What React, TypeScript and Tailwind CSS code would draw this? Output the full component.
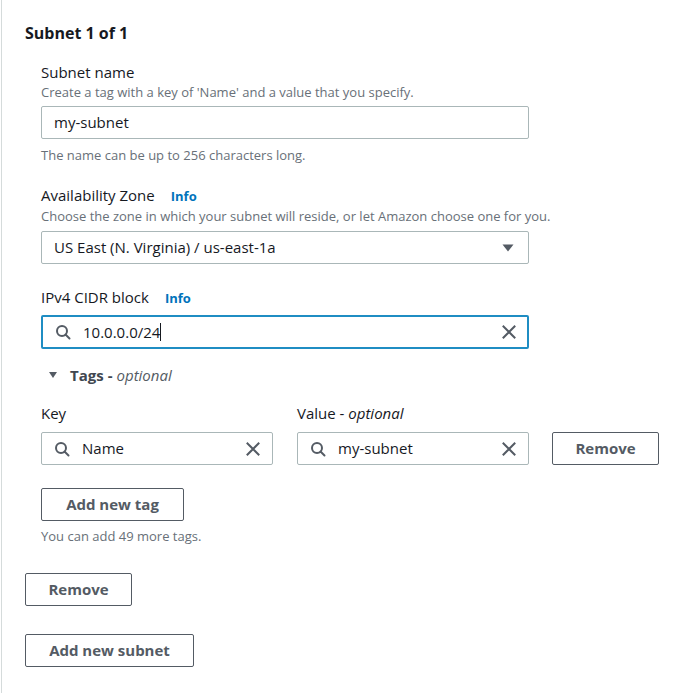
import React from "react";

const font = { fontFamily: '"Open Sans", "Noto Sans", Arial, sans-serif' };

function SearchIcon() {
  return (
    <svg width="16" height="16" viewBox="0 0 16 16" fill="none" stroke="#545b64" strokeWidth="2" strokeLinecap="round">
      <circle cx="7" cy="7" r="5" />
      <path d="M10.5 10.5 L14.5 14.5" />
    </svg>
  );
}

function XIcon() {
  return (
    <svg width="16" height="16" viewBox="0 0 16 16" fill="none" stroke="#545b64" strokeWidth="2" strokeLinecap="square">
      <path d="M2.5 2.5 L13.5 13.5 M13.5 2.5 L2.5 13.5" />
    </svg>
  );
}

function Btn({ children, w }: { children: React.ReactNode; w: string }) {
  return (
    <div
      className={`${w} h-[33px] flex items-center justify-center border border-[#545b64] rounded-[2px] text-[15px] font-bold text-[#545b64]`}
    >
      {children}
    </div>
  );
}

export default function App() {
  return (
    <div className="w-[687px] h-[693px] bg-white overflow-hidden text-[#16191f]" style={font}>
      <div className="ml-[1px] h-full border-l border-[#d5dbdb] pl-[23px] pt-[23px] flex flex-col">
        <div className="text-[16px] leading-[20px] font-bold">Subnet 1 of 1</div>

        <div className="pl-[16px] flex flex-col">
          <div className="mt-[18px] text-[15px] leading-[22px]">Subnet name</div>
          <div className="mt-[1px] text-[13px] leading-[16px] text-[#687078]">
            Create a tag with a key of 'Name' and a value that you specify.
          </div>
          <div className="mt-[6px] w-[488px] h-[33px] border border-[#aab7b8] rounded-[2px] flex items-center pl-[12px] text-[15px]">
            my-subnet
          </div>
          <div className="mt-[8px] text-[13px] leading-[16px] text-[#687078]">
            The name can be up to 256 characters long.
          </div>

          <div className="mt-[21px] text-[15px] leading-[22px] flex items-baseline">
            <span>Availability Zone</span>
            <span className="ml-[16px] text-[13px] font-bold text-[#0073bb]">Info</span>
          </div>
          <div className="mt-[1px] text-[13px] leading-[16px] text-[#687078]">
            Choose the zone in which your subnet will reside, or let Amazon choose one for you.
          </div>
          <div className="mt-[7px] w-[488px] h-[33px] border border-[#aab7b8] rounded-[2px] flex items-center justify-between pl-[12px] pr-[14px] text-[15px]">
            <span>US East (N. Virginia) / us-east-1a</span>
            <svg width="12" height="8" viewBox="0 0 12 8">
              <path d="M0.5 0.5 H11.5 L6 7.5 Z" fill="#545b64" />
            </svg>
          </div>

          <div className="mt-[22px] text-[15px] leading-[22px] flex items-baseline">
            <span>IPv4 CIDR block</span>
            <span className="ml-[16px] text-[13px] font-bold text-[#0073bb]">Info</span>
          </div>
          <div className="mt-[6px] w-[488px] h-[34px] border-2 border-[#1f8dc3] rounded-[2px] flex items-center pl-[12px] pr-[10px] text-[15px]">
            <SearchIcon />
            <span className="ml-[12px]">10.0.0.0/24</span>
            <span className="w-[1px] h-[18px] bg-[#16191f]" />
            <span className="flex-1" />
            <XIcon />
          </div>

          <div className="mt-[15px] pl-[8px] text-[15px] leading-[22px] flex items-center text-[#414750]">
            <svg width="8" height="6" viewBox="0 0 8 6">
              <path d="M0 0 H8 L4 6 Z" fill="#545b64" />
            </svg>
            <span className="ml-[13px] font-bold">Tags</span>
            <span className="ml-[4px] font-bold">-</span>
            <span className="ml-[4px] italic text-[#545b64]">optional</span>
          </div>

          <div className="mt-[16px] flex">
            <div className="w-[232px] flex flex-col">
              <div className="text-[15px] leading-[22px]">Key</div>
              <div className="mt-[8px] h-[33px] border border-[#aab7b8] rounded-[2px] flex items-center pl-[12px] pr-[11px] text-[15px]">
                <SearchIcon />
                <span className="ml-[12px]">Name</span>
                <span className="flex-1" />
                <XIcon />
              </div>
            </div>
            <div className="ml-[24px] w-[232px] flex flex-col">
              <div className="text-[15px] leading-[22px]">
                Value - <span className="italic">optional</span>
              </div>
              <div className="mt-[8px] h-[33px] border border-[#aab7b8] rounded-[2px] flex items-center pl-[12px] pr-[11px] text-[15px]">
                <SearchIcon />
                <span className="ml-[12px]">my-subnet</span>
                <span className="flex-1" />
                <XIcon />
              </div>
            </div>
            <div className="ml-[23px] flex flex-col">
              <div className="h-[22px]" />
              <div className="mt-[8px]">
                <Btn w="w-[107px]">Remove</Btn>
              </div>
            </div>
          </div>

          <div className="mt-[23px]">
            <Btn w="w-[143px]">Add new tag</Btn>
          </div>
          <div className="mt-[7px] text-[13px] leading-[16px] text-[#687078]">You can add 49 more tags.</div>
        </div>

        <div className="mt-[29px]">
          <Btn w="w-[107px]">Remove</Btn>
        </div>
        <div className="mt-[28px]">
          <Btn w="w-[169px]">Add new subnet</Btn>
        </div>
      </div>
    </div>
  );
}
